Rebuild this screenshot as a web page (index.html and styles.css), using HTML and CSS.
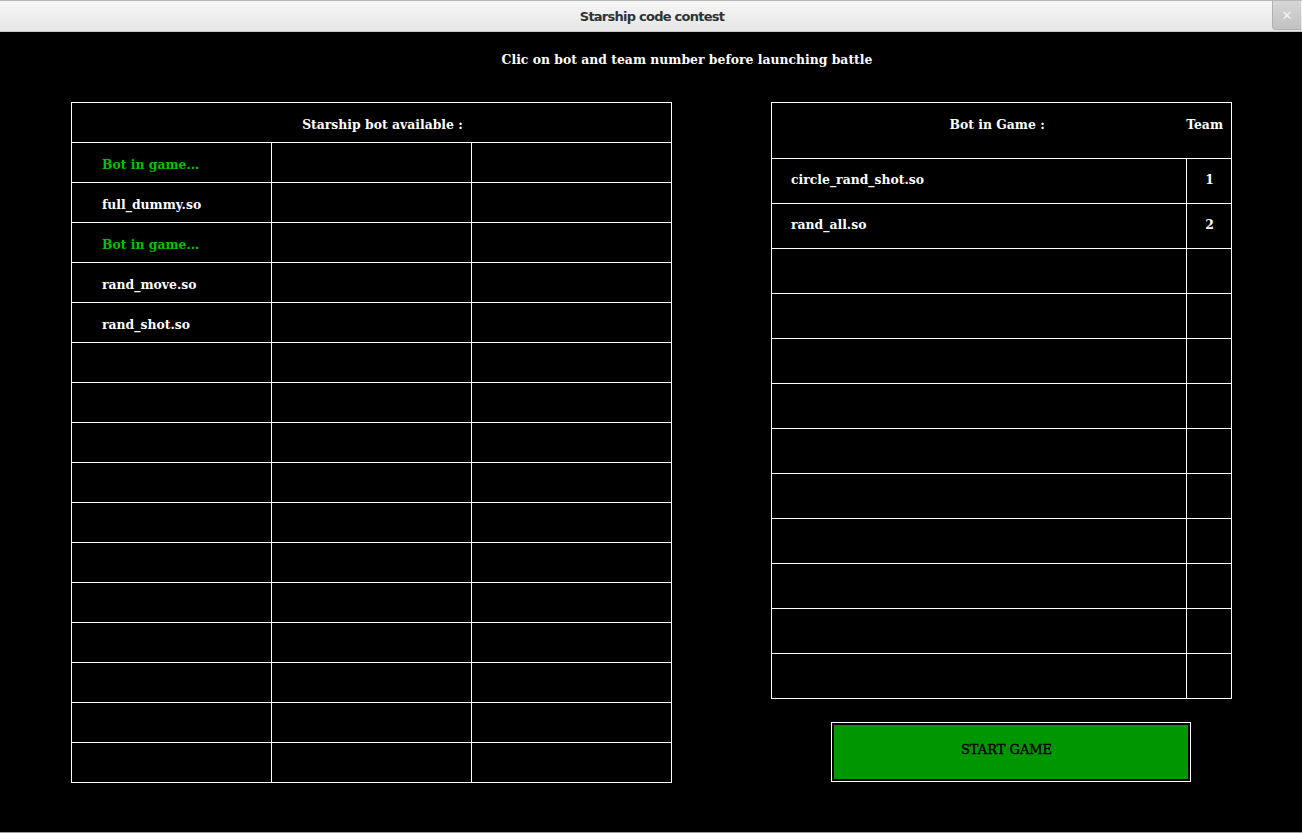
FILE: index.html
```html
<!DOCTYPE html>
<html lang="en">
<head>
    <meta charset="UTF-8">
    <title>Starship code contest</title>
    <link rel="stylesheet" href="styles.css">
</head>
<body>
    <div class="titlebar">
        <span class="title">Starship code contest</span>
        <div class="close">&#x2715;</div>
    </div>
    <div class="main">
        <p class="hint">Clic on bot and team number before launching battle</p>
        <div class="panels">
            <div class="bot-list">
                <div class="list-head">Starship bot available :</div>
                <div class="cell in-game">Bot in game...</div><div class="cell"></div><div class="cell"></div>
                <div class="cell">full_dummy.so</div><div class="cell"></div><div class="cell"></div>
                <div class="cell in-game">Bot in game...</div><div class="cell"></div><div class="cell"></div>
                <div class="cell">rand_move.so</div><div class="cell"></div><div class="cell"></div>
                <div class="cell">rand_shot.so</div><div class="cell"></div><div class="cell"></div>
                <div class="cell"></div><div class="cell"></div><div class="cell"></div>
                <div class="cell"></div><div class="cell"></div><div class="cell"></div>
                <div class="cell"></div><div class="cell"></div><div class="cell"></div>
                <div class="cell"></div><div class="cell"></div><div class="cell"></div>
                <div class="cell"></div><div class="cell"></div><div class="cell"></div>
                <div class="cell"></div><div class="cell"></div><div class="cell"></div>
                <div class="cell"></div><div class="cell"></div><div class="cell"></div>
                <div class="cell"></div><div class="cell"></div><div class="cell"></div>
                <div class="cell"></div><div class="cell"></div><div class="cell"></div>
                <div class="cell"></div><div class="cell"></div><div class="cell"></div>
                <div class="cell"></div><div class="cell"></div><div class="cell"></div>
            </div>
            <div class="game-side">
                <div class="game-list">
                    <div class="game-head">
                        <span class="game-title">Bot in Game :</span>
                        <span class="team-title">Team</span>
                    </div>
                    <div class="gcell">circle_rand_shot.so</div><div class="tcell">1</div>
                    <div class="gcell">rand_all.so</div><div class="tcell">2</div>
                    <div class="gcell"></div><div class="tcell"></div>
                    <div class="gcell"></div><div class="tcell"></div>
                    <div class="gcell"></div><div class="tcell"></div>
                    <div class="gcell"></div><div class="tcell"></div>
                    <div class="gcell"></div><div class="tcell"></div>
                    <div class="gcell"></div><div class="tcell"></div>
                    <div class="gcell"></div><div class="tcell"></div>
                    <div class="gcell"></div><div class="tcell"></div>
                    <div class="gcell"></div><div class="tcell"></div>
                    <div class="gcell"></div><div class="tcell"></div>
                </div>
                <div class="start-wrap">
                    <button class="start">START GAME</button>
                </div>
            </div>
        </div>
    </div>
</body>
</html>
```

FILE: styles.css
```css
body {
    margin: 0;
    background: #000;
    font-family: "DejaVu Serif", serif;
    font-size: 12.4px;
    font-weight: bold;
    color: #fff;
}

.titlebar {
    position: relative;
    box-sizing: border-box;
    height: 32px;
    border-top: 1px solid #b8b8b8;
    border-bottom: 1px solid #c8c8c8;
    background: linear-gradient(#f6f6f6, #e6e6e6);
    display: flex;
    justify-content: center;
    align-items: center;
}

.title {
    font-family: "DejaVu Sans", sans-serif;
    font-size: 13px;
    font-weight: bold;
    color: #2e3436;
    letter-spacing: -0.75px;
    padding-left: 2px;
}

.close {
    position: absolute;
    top: 0;
    right: 1px;
    width: 28px;
    height: 28px;
    background: linear-gradient(#d6d6d6, #c2c2c2);
    border-left: 1px solid #b0b0b0;
    border-bottom: 1px solid #b0b0b0;
    border-bottom-left-radius: 4px;
    color: #f4f4f4;
    font-family: "DejaVu Sans", sans-serif;
    font-size: 13px;
    font-weight: bold;
    display: flex;
    align-items: center;
    justify-content: center;
}

.main {
    height: 800px;
    border-bottom: 1px solid #9a9a9a;
}

.hint {
    margin: 0;
    padding-top: 20px;
    line-height: 16px;
    text-align: center;
    padding-left: 72px;
}

.panels {
    display: flex;
    margin-top: 34px;
    padding-left: 71px;
    gap: 99px;
}

.bot-list {
    display: grid;
    grid-template-columns: repeat(3, 200px);
    grid-auto-rows: 40px;
    border-left: 1px solid #fff;
    border-top: 1px solid #fff;
}

.list-head,
.cell {
    border-right: 1px solid #fff;
    border-bottom: 1px solid #fff;
    display: flex;
    align-items: center;
    padding-top: 3px;
}

.list-head {
    grid-column: 1 / -1;
    justify-content: center;
    padding-left: 22px;
}

.cell {
    padding-left: 30px;
}

.in-game {
    color: #00c000;
}

.game-list {
    display: grid;
    grid-template-columns: 415px 45px;
    grid-template-rows: 56px;
    grid-auto-rows: 45px;
    border-left: 1px solid #fff;
    border-top: 1px solid #fff;
}

.game-head {
    grid-column: 1 / -1;
    border-right: 1px solid #fff;
    border-bottom: 1px solid #fff;
    display: grid;
    grid-template-columns: 1fr auto;
    padding-top: 14px;
}

.game-title {
    text-align: center;
    padding-left: 36px;
}

.team-title {
    padding-right: 8px;
}

.gcell,
.tcell {
    border-right: 1px solid #fff;
    border-bottom: 1px solid #fff;
    display: flex;
    align-items: center;
    padding-bottom: 3px;
}

.gcell {
    padding-left: 19px;
}

.tcell {
    justify-content: center;
    padding-left: 1px;
}

.start-wrap {
    margin-top: 23px;
    padding-left: 60px;
}

.start {
    width: 360px;
    height: 60px;
    border: 1px solid #fff;
    padding: 0 9px 6px 0;
    background: #009600;
    box-shadow: inset 0 0 0 2px #000;
    font-family: "DejaVu Serif", serif;
    font-size: 13px;
    font-weight: normal;
    color: #000;
    -webkit-text-stroke: 0.4px #000;
}
```
